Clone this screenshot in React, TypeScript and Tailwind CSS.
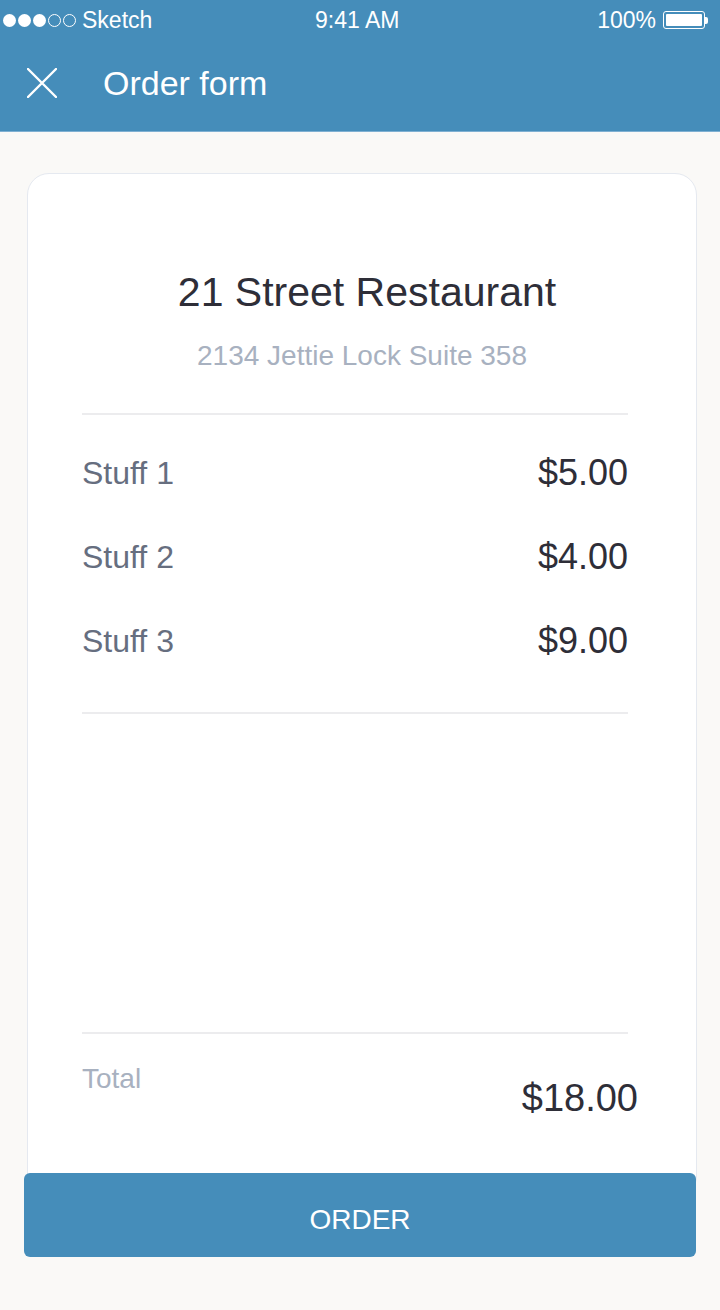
const font = { fontFamily: '"Liberation Sans", Arial, sans-serif' };

const items = [
  { name: "Stuff 1", price: "$5.00" },
  { name: "Stuff 2", price: "$4.00" },
  { name: "Stuff 3", price: "$9.00" },
];

function StatusBar() {
  return (
    <div className="relative flex h-[40px] items-center justify-between pl-[3px] pr-[12px] text-[23px] leading-none text-white">
      <div className="flex items-center">
        <div className="flex items-center gap-[2px]">
          <span className="h-[13px] w-[13px] rounded-full bg-white" />
          <span className="h-[13px] w-[13px] rounded-full bg-white" />
          <span className="h-[13px] w-[13px] rounded-full bg-white" />
          <span className="h-[13px] w-[13px] rounded-full border border-white" />
          <span className="h-[13px] w-[13px] rounded-full border border-white" />
        </div>
        <span className="ml-[6px]">Sketch</span>
      </div>
      <span className="absolute left-[315px]">9:41 AM</span>
      <div className="flex items-center">
        <span>100%</span>
        <div className="ml-[7px] flex items-center">
          <div className="h-[18px] w-[42px] rounded-[3px] border-[1.5px] border-white p-[2px]">
            <div className="h-full w-full rounded-[1px] bg-white" />
          </div>
          <div className="h-[7px] w-[3px] rounded-r-[2px] bg-white" />
        </div>
      </div>
    </div>
  );
}

function NavBar() {
  return (
    <div className="flex h-[92px] items-center border-b border-[#7fb0d2] pl-[27px] pb-[6px]">
      <svg width="30" height="30" viewBox="0 0 30 30" fill="none">
        <path d="M1 1L29 29M29 1L1 29" stroke="white" strokeWidth="2.4" strokeLinecap="round" />
      </svg>
      <span className="ml-[46px] text-[34px] leading-none text-white">Order form</span>
    </div>
  );
}

export default function App() {
  return (
    <div className="min-h-[1310px] w-[720px] bg-[#faf9f7]" style={font}>
      <header className="bg-[#458dba]">
        <StatusBar />
        <NavBar />
      </header>
      <main className="flex flex-col pl-[24px] pr-[23px] pt-[41px]">
        <div className="ml-[3px] rounded-[22px] border border-[#e5e9f0] bg-white pb-[80px]">
          <div className="pt-[98px] text-center">
            <h1 className="ml-[10px] text-[41px] leading-[41px] text-[#2e2e38]">21 Street Restaurant</h1>
            <p className="mt-[29px] text-[28px] leading-[28px] text-[#a8b1c0]">2134 Jettie Lock Suite 358</p>
          </div>
          <div className="pl-[54px] pr-[68px]">
            <div className="mt-[43px] h-[2px] bg-[#ececee]" />
            <div className="mt-[38px] flex flex-col gap-[44px]">
              {items.map((item) => (
                <div key={item.name} className="flex items-center justify-between h-[40px]">
                  <span className="text-[32px] leading-none text-[#666e7f]">{item.name}</span>
                  <span className="text-[36px] leading-none text-[#2e2e38]">{item.price}</span>
                </div>
              ))}
            </div>
            <div className="mt-[51px] h-[2px] bg-[#ececee]" />
            <div className="mt-[318px] h-[2px] bg-[#ececee]" />
            <div className="mt-[31px] flex items-start justify-between">
              <span className="text-[28px] leading-[28px] text-[#a8b1c0]">Total</span>
              <span className="mr-[-10px] mt-[14px] text-[38px] leading-[38px] text-[#2e2e38]">$18.00</span>
            </div>
          </div>
        </div>
        <button className="relative z-10 mr-[1px] mt-[-25px] h-[84px] rounded-[6px] bg-[#458dba] pt-[10px] text-[28px] leading-none text-white">
          ORDER
        </button>
      </main>
    </div>
  );
}
